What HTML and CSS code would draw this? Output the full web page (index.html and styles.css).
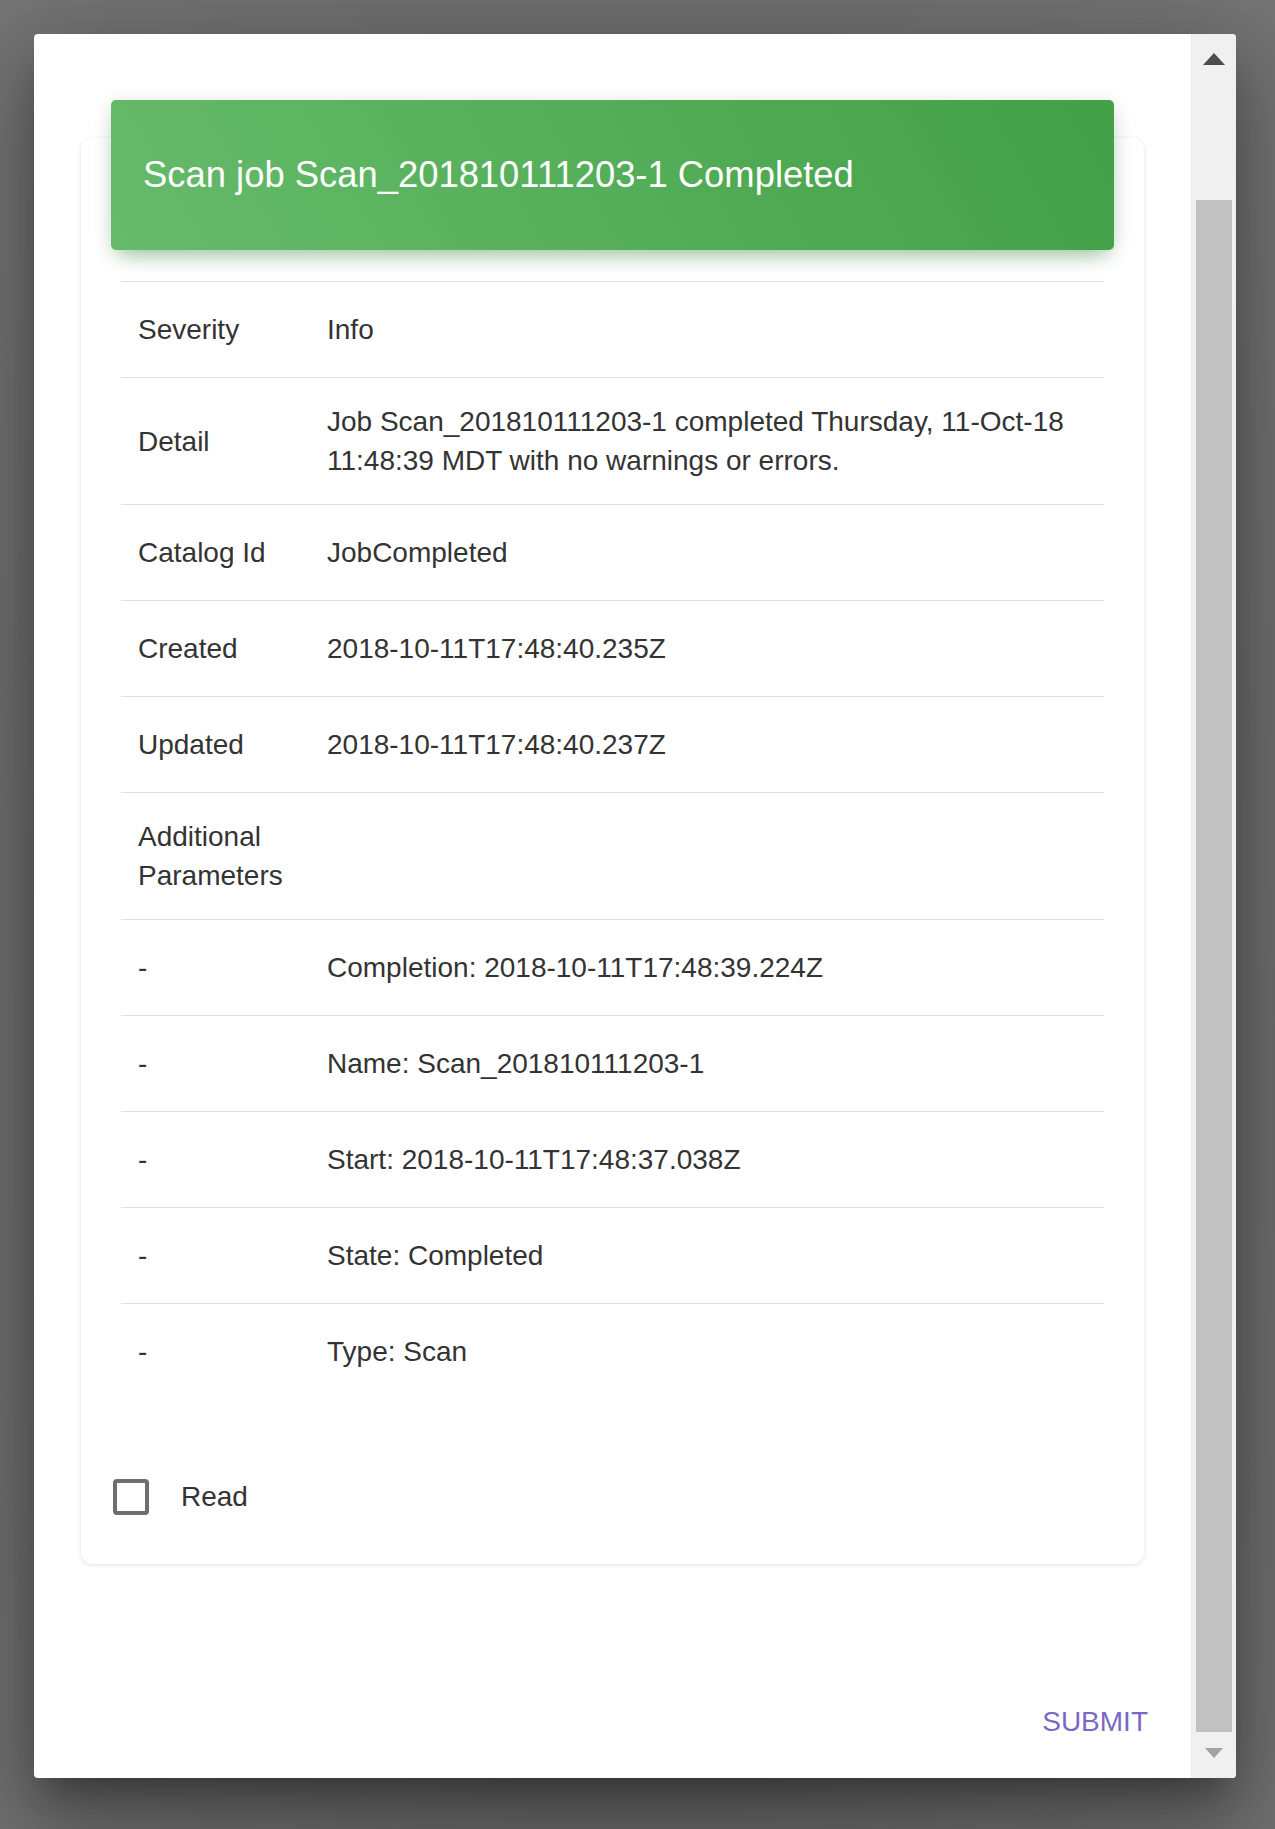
FILE: index.html
```html
<html>
<head>
<title>Notification</title>
<meta charset="utf-8">
<link rel="stylesheet" href="styles.css">
</head>
<body>
<div class="backdrop">
	<div class="dialog">
		<div class="dialog-content">
			<div class="card">
				<div class="card-header">
					<h4 class="card-title">Scan job Scan_201810111203-1 Completed</h4>
				</div>
				<table class="detail-table">
					<colgroup><col class="col-label"><col></colgroup>
					<tr><td>Severity</td><td>Info</td></tr>
					<tr><td>Detail</td><td>Job Scan_201810111203-1 completed Thursday, 11-Oct-18 11:48:39 MDT with no warnings or errors.</td></tr>
					<tr><td>Catalog Id</td><td>JobCompleted</td></tr>
					<tr><td>Created</td><td>2018-10-11T17:48:40.235Z</td></tr>
					<tr><td>Updated</td><td>2018-10-11T17:48:40.237Z</td></tr>
					<tr><td>Additional Parameters</td><td></td></tr>
					<tr><td>-</td><td>Completion: 2018-10-11T17:48:39.224Z</td></tr>
					<tr><td>-</td><td>Name: Scan_201810111203-1</td></tr>
					<tr><td>-</td><td>Start: 2018-10-11T17:48:37.038Z</td></tr>
					<tr><td>-</td><td>State: Completed</td></tr>
					<tr><td>-</td><td>Type: Scan</td></tr>
				</table>
				<label class="check-row">
					<span class="check-box"></span>
					<span class="check-label">Read</span>
				</label>
			</div>
			<div class="dialog-actions">
				<button class="text-button">Submit</button>
			</div>
		</div>
		<div class="scrollbar">
			<div class="scroll-btn">
				<svg width="22" height="12" viewBox="0 0 22 12"><polygon points="11,0 22,12 0,12" fill="#4d4d4d"/></svg>
			</div>
			<div class="scroll-track"><div class="scroll-thumb"></div></div>
			<div class="scroll-btn down">
				<svg width="18" height="10" viewBox="0 0 18 10"><polygon points="0,0 18,0 9,10" fill="#a3a3a3"/></svg>
			</div>
		</div>
	</div>
</div>
</body>
</html>
```

FILE: styles.css
```css
*,:after,:before{box-sizing:border-box}
body{
	margin:0;
	background:#737373;
	font:400 28px/39px 'Liberation Sans',Arial,sans-serif;
	color:#333;
}

.backdrop{
	height:1829px;
	padding:34px 39px 51px 34px;
	background:radial-gradient(ellipse at 50% 60%,#5a5a5a 0,#6a6a6a 55%,#757575 100%);
}
.dialog{
	display:flex;
	height:1744px;
	background:#fff;
	border-radius:4px;
	overflow:hidden;
	box-shadow:0 22px 30px -14px rgba(0,0,0,.3),0 48px 76px 6px rgba(0,0,0,.2),0 18px 92px 16px rgba(0,0,0,.16);
}
.dialog-content{
	flex:1;
	display:flex;
	flex-direction:column;
	padding:104px 47px 40px 47px;
}

.card{
	background:#fff;
	border-radius:12px;
	padding:0 40px 49px 40px;
	box-shadow:0 1px 5px 0 rgba(0,0,0,.12);
}
.card-header{
	display:flex;
	align-items:center;
	height:150px;
	margin:-38px -10px 0 -10px;
	padding:0 32px;
	border-radius:5px;
	background:linear-gradient(60deg,#66bb6a,#43a047);
	box-shadow:0 4px 20px 0 rgba(0,0,0,.14),0 14px 20px -10px rgba(76,175,80,.45);
}
.card-title{
	margin:0;
	color:#fff;
	font-size:36.4px;
	font-weight:400;
	line-height:normal;
}

.detail-table{
	width:100%;
	margin-top:31px;
	border-collapse:collapse;
	table-layout:fixed;
	font:inherit;
	color:inherit;
}
.detail-table .col-label{width:189px}
.detail-table tr{height:96px}
.detail-table td{
	padding:24px 17px;
	border-top:1px solid #e0e0e0;
	vertical-align:middle;
}

.check-row{
	display:flex;
	align-items:center;
	margin:79px 0 0 -8px;
	line-height:36px;
}
.check-box{
	width:36px;
	height:36px;
	border:4px solid #6e6e6e;
	border-radius:4px;
	margin-right:32px;
}
.check-label{color:#333}

.dialog-actions{
	display:flex;
	justify-content:flex-end;
	margin-top:auto;
}
.text-button{
	border:none;
	background:none;
	padding:0;
	margin-right:-4px;
	font:400 28px/32px 'Liberation Sans',Arial,sans-serif;
	color:#7b68c2;
	text-transform:uppercase;
}

.scrollbar{
	width:45px;
	display:flex;
	flex-direction:column;
	background:#f0f0f0;
	border-left:1px solid #ececec;
}
.scroll-btn{
	height:46px;
	display:flex;
	justify-content:center;
	padding-top:19px;
}
.scroll-btn.down{
	align-items:flex-start;
	padding-top:16px;
}
.scroll-track{
	flex:1;
	display:flex;
	padding:120px 4px 0 4px;
}
.scroll-thumb{
	flex:1;
	background:#c1c1c1;
}
```
